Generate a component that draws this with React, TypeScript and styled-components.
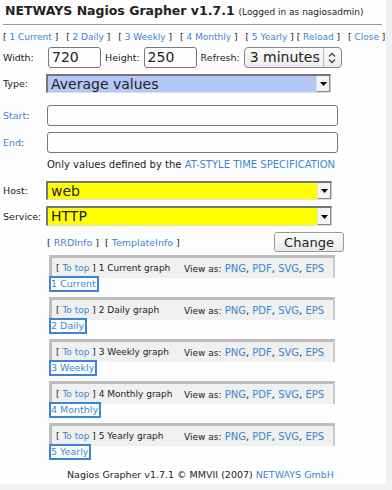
import styled, { createGlobalStyle } from "styled-components";

const GlobalStyle = createGlobalStyle`
  html, body {
    margin: 0;
    padding: 0;
    background: #eff0ef;
  }
  body {
    font-family: "DejaVu Sans", Verdana, sans-serif;
    color: #222;
  }
`;

const navLinks = ["1 Current", "2 Daily", "3 Weekly", "4 Monthly", "5 Yearly"];

const graphs = [
  { id: "1 Current", title: "1 Current graph" },
  { id: "2 Daily", title: "2 Daily graph" },
  { id: "3 Weekly", title: "3 Weekly graph" },
  { id: "4 Monthly", title: "4 Monthly graph" },
  { id: "5 Yearly", title: "5 Yearly graph" },
];

const Arrow = () => (
  <ArrowBox>
    <svg width="7" height="4" viewBox="0 0 7 4">
      <path d="M0 0h7L3.5 4z" fill="#000" />
    </svg>
  </ArrowBox>
);

const App = () => {
  return (
    <>
      <GlobalStyle />
      <Page>
        <Header>
          <Title>NETWAYS Nagios Grapher v1.7.1</Title>
          <Login>(Logged in as nagiosadmin)</Login>
        </Header>
        <Nav>
          {navLinks.map((l) => (
            <NavItem key={l}>
              [ <A href="#">{l}</A> ]
            </NavItem>
          ))}
          <NavItem $tight>
            [ <A href="#">Reload</A> ]
          </NavItem>
          <NavItem>
            [ <A href="#">Close</A> ]
          </NavItem>
        </Nav>

        <Form>
          <SizeRow>
            <Label>Width:</Label>
            <TextBox $w={53}>720</TextBox>
            <Label>Height:</Label>
            <TextBox $w={53}>250</TextBox>
            <Label>Refresh:</Label>
            <Spin>
              <SpinText>3 minutes</SpinText>
              <SpinIcon>
                <svg width="8" height="12" viewBox="0 0 8 12">
                  <path
                    d="M1 4.5L4 1.5L7 4.5M1 7.5L4 10.5L7 7.5"
                    fill="none"
                    stroke="#444"
                    strokeWidth="1.3"
                  />
                </svg>
              </SpinIcon>
            </Spin>
          </SizeRow>

          <Row $h={18} $mt={6}>
            <Label>Type:</Label>
            <DropDown $bg="#b4c8f8" $w={285}>
              <span>Average values</span>
              <Arrow />
            </DropDown>
          </Row>

          <Row $h={21} $mt={13}>
            <Label>
              <A href="#">Start</A>:
            </Label>
            <Field />
          </Row>
          <Row $h={21} $mt={6}>
            <Label>
              <A href="#">End</A>:
            </Label>
            <Field />
          </Row>
          <Hint>
            Only values defined by the <A href="#">AT-STYLE TIME SPECIFICATION</A>
          </Hint>

          <Row $h={19} $mt={10}>
            <Label>Host:</Label>
            <DropDown $bg="#ffff00" $w={286}>
              <span>web</span>
              <Arrow />
            </DropDown>
          </Row>
          <Row $h={20} $mt={6}>
            <Label>Service:</Label>
            <DropDown $bg="#ffff00" $w={286}>
              <span>HTTP</span>
              <Arrow />
            </DropDown>
          </Row>

          <InfoRow>
            <span>
              [ <A href="#">RRDInfo</A> ]&nbsp; [ <A href="#">TemplateInfo</A> ]
            </span>
            <Button>Change</Button>
          </InfoRow>
        </Form>

        <Graphs>
          {graphs.map((g) => (
            <Graph key={g.id}>
              <GraphBar>
                <GraphName>
                  [ <A href="#">To top</A> ] {g.title}
                </GraphName>
                <ViewAs>
                  <small>View as:</small> <A href="#">PNG</A>, <A href="#">PDF</A>,{" "}
                  <A href="#">SVG</A>, <A href="#">EPS</A>
                </ViewAs>
              </GraphBar>
              <Anchor href="#">{g.id}</Anchor>
            </Graph>
          ))}
        </Graphs>

        <Footer>
          Nagios Grapher v1.7.1 &copy; MMVII (2007) <A href="#">NETWAYS GmbH</A>
        </Footer>
      </Page>
    </>
  );
};

export default App;

const Page = styled.div`
  width: 386px;
  height: 484px;
  background: #fefefe;
  padding-left: 3px;
  box-sizing: border-box;
  font-size: 10px;
  overflow: hidden;
`;

const Header = styled.div`
  display: flex;
  align-items: baseline;
  gap: 4px;
  height: 25px;
  padding-top: 3px;
  box-sizing: border-box;
  border-bottom: 1px solid #999;
  width: 379px;
  white-space: nowrap;
`;

const Title = styled.h1`
  margin: 0 0 0 2px;
  font-size: 12.5px;
  font-weight: bold;
  color: #222;
`;

const Login = styled.span`
  font-size: 9px;
`;

const A = styled.a`
  color: #3c86d3;
  text-decoration: none;
`;

const Nav = styled.div`
  display: flex;
  gap: 8px;
  margin-top: 7px;
  white-space: nowrap;
  font-size: 9px;
`;

const NavItem = styled.span<{ $tight?: boolean }>`
  margin-left: ${(p) => (p.$tight ? "-5px" : "0")};
`;

const Form = styled.div`
  margin-top: 5px;
  font-size: 9.5px;
`;

const SizeRow = styled.div`
  display: flex;
  align-items: center;
  height: 21px;
  gap: 4px;
`;

const Row = styled.div<{ $h: number; $mt: number }>`
  display: grid;
  grid-template-columns: 43px auto;
  align-items: center;
  height: ${(p) => p.$h}px;
  margin-top: ${(p) => p.$mt}px;
`;

const Label = styled.span`
  white-space: nowrap;
  &:first-child {
    width: 41px;
  }
`;

const TextBox = styled.div<{ $w: number }>`
  width: ${(p) => p.$w}px;
  height: 21px;
  box-sizing: border-box;
  border: 1px solid #777;
  border-radius: 3px;
  font-size: 14px;
  line-height: 19px;
  padding-left: 3px;
`;

const Spin = styled.div`
  display: flex;
  align-items: stretch;
  width: 98px;
  height: 21px;
  box-sizing: border-box;
  border: 1px solid #888;
  border-radius: 4px;
  background: linear-gradient(#fbfbfb, #ececec);
`;

const SpinText = styled.span`
  flex: 1;
  font-size: 14px;
  line-height: 19px;
  padding-left: 5px;
`;

const SpinIcon = styled.span`
  width: 17px;
  border-left: 1px solid #bbb;
  display: flex;
  align-items: center;
  justify-content: center;
`;

const DropDown = styled.div<{ $bg: string; $w: number }>`
  display: flex;
  align-items: stretch;
  width: ${(p) => p.$w}px;
  height: 100%;
  box-sizing: border-box;
  background: ${(p) => p.$bg};
  border-top: 2px solid #777;
  border-left: 2px solid #777;
  border-right: 1px solid #ccc;
  border-bottom: 1px solid #ddd;
  font-size: 14px;
  span {
    flex: 1;
    padding-left: 3px;
    line-height: 16px;
  }
`;

const ArrowBox = styled.div`
  width: 13px;
  background: #f4f4f4;
  border-left: 1px solid #ddd;
  box-shadow: inset -1px -1px 0 #888;
  display: flex;
  align-items: center;
  justify-content: center;
`;

const Field = styled.div`
  width: 291px;
  height: 21px;
  box-sizing: border-box;
  border: 1px solid #777;
  border-radius: 3px;
  margin-left: 1px;
`;

const Hint = styled.div`
  margin: 6px 0 0 44px;
  line-height: 12px;
  font-size: 10px;
`;

const InfoRow = styled.div`
  display: flex;
  justify-content: space-between;
  align-items: center;
  width: 341px;
  margin-top: 6px;
  padding-left: 44px;
  box-sizing: border-box;
`;

const Button = styled.button`
  width: 70px;
  height: 20px;
  padding: 0;
  font-family: "DejaVu Sans", sans-serif;
  font-size: 13px;
  color: #222;
  border: 1px solid #999;
  border-radius: 3px;
  background: linear-gradient(#fdfdfd, #eaeaea);
`;

const Graphs = styled.div`
  display: flex;
  flex-direction: column;
  gap: 5px;
  margin: 3px 0 0 46px;
  width: 286px;
`;

const Graph = styled.div`
  display: flex;
  flex-direction: column;
  align-items: flex-start;
`;

const GraphBar = styled.div`
  display: flex;
  width: 100%;
  height: 23px;
  box-sizing: border-box;
  background: #eff0ef;
  border-top: 3px solid #bcbdbc;
  border-left: 3px solid #bcbdbc;
  border-right: 2px solid #c8c9c8;
  align-items: center;
  white-space: nowrap;
`;

const GraphName = styled.span`
  width: 128px;
  padding-left: 4px;
  font-size: 9px;
`;

const ViewAs = styled.span`
  small {
    font-size: 9px;
  }
`;

const Anchor = styled.a`
  color: #3c86d3;
  text-decoration: none;
  border: 2px solid #3a86d0;
  font-size: 9.5px;
  line-height: 12px;
  padding-right: 1px;
  margin-top: -2px;
`;

const Footer = styled.div`
  margin: 9px 0 0 64px;
  font-size: 9.5px;
`;
